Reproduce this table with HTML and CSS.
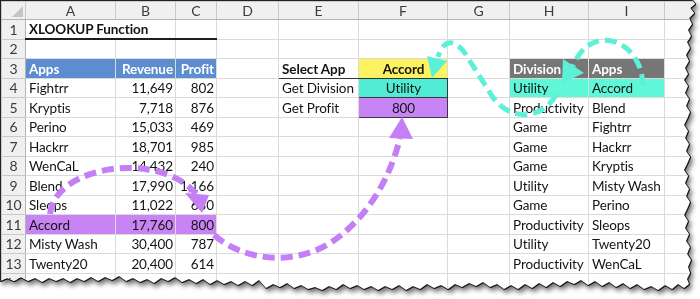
FILE: index.html
```html
<!doctype html>
<html lang="en">
  <head>
    <meta charset="UTF-8" />
    <title>XLOOKUP Function</title>
    <link rel="stylesheet" href="styles.css">
  </head>
  <body>
    <div class="paper">
      <div class="sheet">
        <table class="grid">
          <colgroup>
            <col class="c-rh" />
            <col class="c-a" />
            <col class="c-b" />
            <col class="c-c" />
            <col class="c-d" />
            <col class="c-e" />
            <col class="c-f" />
            <col class="c-g" />
            <col class="c-h" />
            <col class="c-i" />
            <col class="c-j" />
          </colgroup>
          <thead>
            <tr>
              <th class="corner"><span class="select-all"></span></th>
              <th>A</th><th>B</th><th>C</th><th>D</th><th>E</th>
              <th>F</th><th>G</th><th>H</th><th>I</th><th></th>
            </tr>
          </thead>
          <tbody>
            <tr>
              <th>1</th>
              <td class="title" colspan="2">XLOOKUP Function</td>
              <td class="title"></td>
              <td></td><td></td><td></td><td></td><td></td><td></td><td></td>
            </tr>
            <tr>
              <th>2</th>
              <td></td><td></td><td></td><td></td><td></td><td></td><td></td><td></td><td></td><td></td>
            </tr>
            <tr>
              <th>3</th>
              <td class="blue">Apps</td>
              <td class="blue num">Revenue</td>
              <td class="blue num">Profit</td>
              <td></td>
              <td class="label bold">Select App</td>
              <td class="pick">Accord</td>
              <td></td>
              <td class="gray">Division</td>
              <td class="gray">Apps</td>
              <td></td>
            </tr>
            <tr>
              <th>4</th>
              <td>Fightrr</td><td class="num">11,649</td><td class="num">802</td>
              <td></td>
              <td>Get Division</td>
              <td class="out aqua">Utility</td>
              <td></td>
              <td class="mint">Utility</td><td class="mint">Accord</td>
              <td></td>
            </tr>
            <tr>
              <th>5</th>
              <td>Kryptis</td><td class="num">7,718</td><td class="num">876</td>
              <td></td>
              <td>Get Profit</td>
              <td class="out violet">800</td>
              <td></td>
              <td>Productivity</td><td>Blend</td>
              <td></td>
            </tr>
            <tr>
              <th>6</th>
              <td>Perino</td><td class="num">15,033</td><td class="num">469</td>
              <td></td><td></td><td></td><td></td>
              <td>Game</td><td>Fightrr</td><td></td>
            </tr>
            <tr>
              <th>7</th>
              <td>Hackrr</td><td class="num">18,701</td><td class="num">985</td>
              <td></td><td></td><td></td><td></td>
              <td>Game</td><td>Hackrr</td><td></td>
            </tr>
            <tr>
              <th>8</th>
              <td>WenCaL</td><td class="num">14,432</td><td class="num">240</td>
              <td></td><td></td><td></td><td></td>
              <td>Game</td><td>Kryptis</td><td></td>
            </tr>
            <tr>
              <th>9</th>
              <td>Blend</td><td class="num">17,990</td><td class="num">1,166</td>
              <td></td><td></td><td></td><td></td>
              <td>Utility</td><td>Misty Wash</td><td></td>
            </tr>
            <tr>
              <th>10</th>
              <td>Sleops</td><td class="num">11,022</td><td class="num">650</td>
              <td></td><td></td><td></td><td></td>
              <td>Game</td><td>Perino</td><td></td>
            </tr>
            <tr>
              <th>11</th>
              <td class="violet">Accord</td><td class="violet num">17,760</td><td class="violet num">800</td>
              <td></td><td></td><td></td><td></td>
              <td>Productivity</td><td>Sleops</td><td></td>
            </tr>
            <tr>
              <th>12</th>
              <td>Misty Wash</td><td class="num">30,400</td><td class="num">787</td>
              <td></td><td></td><td></td><td></td>
              <td>Utility</td><td>Twenty20</td><td></td>
            </tr>
            <tr>
              <th>13</th>
              <td>Twenty20</td><td class="num">20,400</td><td class="num">614</td>
              <td></td><td></td><td></td><td></td>
              <td>Productivity</td><td>WenCaL</td><td></td>
            </tr>
            <tr>
              <th>14</th>
              <td></td><td></td><td></td><td></td><td></td><td></td><td></td><td></td><td></td><td></td>
            </tr>
          </tbody>
        </table>

        <!-- lookup arrows drawn over the grid -->
        <svg class="arrows" viewBox="0 0 700 299" width="700" height="299">
          <g class="teal">
            <path d="M643,86 C642,38 590,22 573,66" />
            <path d="M556,95 C540,122 508,120 492,96 L468,58 C458,40 444,36 438,57" />
          </g>
          <polygon class="teal-head" points="562,83 563,59 584,73" />
          <polygon class="teal-head" points="432,78 427,56 447,61" />
          <g class="purple">
            <path d="M50,214 C55,165 160,150 196,194" />
            <path d="M214,235 C245,262 300,268 340,236 C375,208 392,170 400,138" />
          </g>
          <polygon class="purple-head" points="202,213 185,193 209,195" />
          <polygon class="purple-head" points="402,117 389,138 413,139" />
        </svg>
      </div>
    </div>
  </body>
</html>
```

FILE: styles.css
```css
:root {
  --grid: #dadada;
  --head-bg: #f0f0f0;
  --head-line: #c9c9c9;
  --blue: #5b8dd0;
  --gray: #767676;
  --yellow: #fdf262;
  --aqua: #52ecd4;
  --mint: #5ef8d8;
  --violet: #c884f5;
  --teal: #5cf0d6;
  --purple: #c47ff6;
}

* {
  margin: 0;
  padding: 0;
  box-sizing: border-box;
}

body {
  width: 700px;
  height: 299px;
  background: #fff;
  overflow: hidden;
  font-family: Lato, "Liberation Sans", sans-serif;
}

/* torn paper: the shadow sits on the wrapper, the rip on the sheet */
.paper {
  width: 700px;
  height: 299px;
  filter: drop-shadow(1px 0 0 #1c1c1c) drop-shadow(0 1px 0 #1c1c1c)
    drop-shadow(2px 3px 2.5px rgba(0, 0, 0, 0.55));
}

.sheet {
  position: relative;
  width: 700px;
  height: 299px;
  background: #fff;
  border-top: 1px solid #222;
  border-left: 1px solid #222;
  clip-path: polygon(
    0 0, 692px 0, 695px 4px, 690px 8px, 694px 13px, 689px 18px, 692px 24px,
    688px 30px, 691px 36px, 687px 42px, 690px 48px, 686px 55px, 689px 61px,
    685px 68px, 688px 74px, 684px 80px, 688px 86px, 685px 93px, 689px 99px,
    686px 106px, 690px 112px, 687px 119px, 684px 125px, 688px 131px,
    685px 138px, 689px 144px, 686px 151px, 690px 157px, 687px 164px,
    684px 170px, 688px 176px, 685px 183px, 689px 189px, 686px 196px,
    690px 202px, 687px 209px, 684px 215px, 688px 221px, 685px 228px,
    689px 234px, 686px 241px, 690px 247px, 687px 254px, 691px 260px,
    688px 267px, 690px 273px, 687px 279px, 689px 284px,
    684px 288px, 678px 284px, 672px 289px, 665px 285px, 658px 290px,
    651px 286px, 644px 289px, 637px 284px, 630px 288px, 623px 283px,
    616px 287px, 609px 282px, 602px 286px, 595px 281px, 588px 285px,
    581px 280px, 574px 284px, 567px 281px, 560px 286px, 553px 282px,
    546px 287px, 539px 283px, 532px 288px, 525px 284px, 518px 289px,
    511px 285px, 504px 289px, 497px 284px, 490px 287px, 483px 282px,
    476px 286px, 469px 283px, 462px 287px, 455px 284px, 448px 289px,
    441px 285px, 434px 288px, 427px 284px, 420px 289px, 413px 286px,
    406px 290px, 399px 285px, 392px 289px, 385px 286px, 378px 290px,
    371px 286px, 364px 289px, 357px 285px, 350px 288px, 343px 284px,
    336px 289px, 329px 286px, 322px 290px, 315px 287px, 308px 289px,
    301px 285px, 294px 288px, 287px 283px, 280px 287px, 273px 284px,
    266px 288px, 259px 280px, 252px 285px, 245px 281px, 238px 285px,
    231px 281px, 224px 284px, 217px 280px, 210px 284px, 203px 279px,
    196px 283px, 189px 279px, 182px 282px, 175px 277px, 168px 281px,
    161px 278px, 154px 283px, 147px 279px, 140px 282px, 133px 278px,
    126px 281px, 119px 276px, 112px 280px, 105px 277px, 98px 281px,
    91px 277px, 84px 281px, 77px 278px, 70px 282px, 63px 278px,
    56px 281px, 49px 278px, 42px 282px, 35px 278px, 28px 281px,
    21px 277px, 14px 281px, 7px 278px, 0 281px
  );
}

/* spreadsheet grid */
.grid {
  border-collapse: collapse;
  table-layout: fixed;
  width: 700px;
  font-size: 13.5px;
  letter-spacing: -0.1px;
  color: #141414;
}

.c-rh { width: 24px; }
.c-a { width: 90px; }
.c-b { width: 60px; }
.c-c { width: 41px; }
.c-d { width: 62px; }
.c-e { width: 80px; }
.c-f { width: 89px; }
.c-g { width: 62px; }
.c-h { width: 79px; }
.c-i { width: 76px; }
.c-j { width: 37px; }

.grid th {
  background: var(--head-bg);
  color: #3c3c3c;
  font-size: 14px;
  font-weight: 400;
  border: 1px solid var(--head-line);
  text-align: center;
  white-space: nowrap;
}

.grid thead th {
  height: 18px;
  border-bottom-color: #b4b4b4;
}

.grid tbody th {
  border-right-color: #b4b4b4;
}

.grid td {
  height: 19.5px;
  padding: 0 2px 0 3px;
  border: 1px solid var(--grid);
  white-space: nowrap;
  overflow: hidden;
  vertical-align: bottom;
  line-height: 18px;
}

.corner {
  position: relative;
}

.select-all {
  position: absolute;
  right: 2px;
  bottom: 2px;
  width: 0;
  height: 0;
  border-left: 11px solid transparent;
  border-bottom: 11px solid #c4c4c4;
}

.num {
  text-align: right;
}

.bold,
.title,
.blue,
.gray,
.pick {
  font-weight: 700;
}

.title {
  border-bottom: 2px solid #1e1e1e !important;
}

.blue {
  background: var(--blue);
  color: #fff;
}

.gray {
  background: var(--gray);
  color: #fff;
}

.label {
  border-bottom: 1px solid #333 !important;
}

.pick {
  background: var(--yellow);
  text-align: center;
  border-bottom: 1px solid #333 !important;
}

.out {
  text-align: center;
  border: 1px solid #3a3a3a !important;
}

.aqua {
  background: var(--aqua);
}

.mint {
  background: var(--mint);
}

.violet {
  background: var(--violet);
}

/* dashed lookup arrows */
.arrows {
  position: absolute;
  top: -1px;
  left: -1px;
  pointer-events: none;
}

.arrows path {
  fill: none;
  stroke-dasharray: 12 6;
}

.teal path {
  stroke: var(--teal);
  stroke-width: 5;
}

.purple path {
  stroke: var(--purple);
  stroke-width: 6;
}

.teal-head {
  fill: var(--teal);
}

.purple-head {
  fill: var(--purple);
}
```
